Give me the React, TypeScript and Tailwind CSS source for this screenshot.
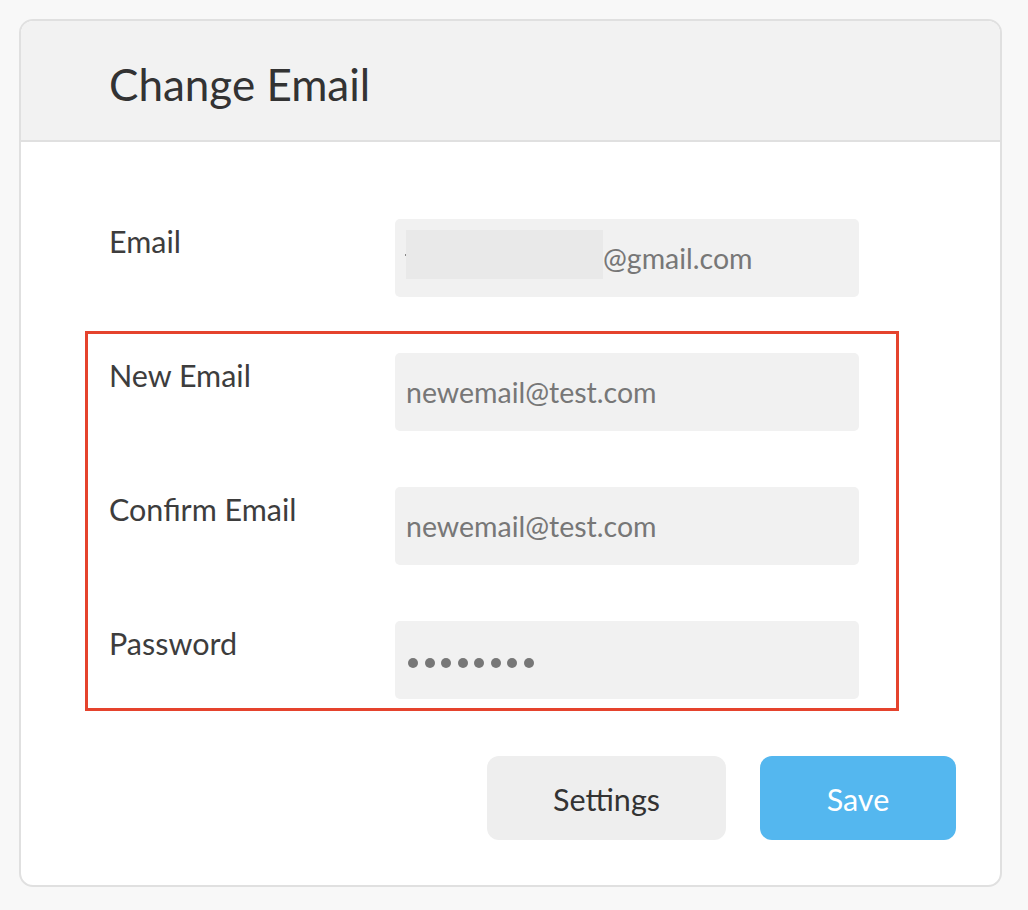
const font = { fontFamily: "Lato, 'Noto Sans', sans-serif" };

function Row({ label, children }: { label: string; children: React.ReactNode }) {
  return (
    <div className="flex">
      <span className="w-[286px] shrink-0 pt-[7px] text-[30.5px] leading-none text-[#3d3d3d]">{label}</span>
      <div className="flex h-[78px] w-[464px] items-center rounded-[5px] bg-[#f1f1f1] px-[11px] text-[28.5px] text-[#777]">
        {children}
      </div>
    </div>
  );
}

export default function App() {
  return (
    <div className="min-h-screen bg-[#f8f8f8] pt-[19px] pl-[19px]" style={font}>
      <div className="h-[868px] w-[983px] overflow-hidden rounded-[14px] border-2 border-[#e0e0e0] bg-white">
        <div className="h-[121px] border-b-2 border-[#e0e0e0] bg-[#f2f2f2] pt-[41px] pl-[88px]">
          <h1 className="text-[44px] leading-none font-normal text-[#333]">Change Email</h1>
        </div>

        <div className="pt-[77px] pl-[64px]">
          <div className="pl-[24px]">
            <Row label="Email">
              <div className="relative flex items-center">
                <span className="absolute -left-[1px] top-[20px] h-[2px] w-[2px] bg-[#888]" />
                <span className="relative -top-[4px] h-[49px] w-[197px] bg-[#e9e9e9]" />
                <span>@gmail.com</span>
              </div>
            </Row>
          </div>

          <div className="mt-[34px] flex w-[814px] flex-col gap-[56px] border-[3px] border-[#e5432d] pt-[19px] pb-[9px] pl-[21px]">
            <Row label="New Email">newemail@test.com</Row>
            <Row label="Confirm Email">newemail@test.com</Row>
            <Row label="Password">
              <div className="flex gap-[6.5px] pl-[2px] pt-[5px]">
                {Array.from({ length: 8 }).map((_, i) => (
                  <span key={i} className="h-[10px] w-[10px] rounded-full bg-[#777]" />
                ))}
              </div>
            </Row>
          </div>

          <div className="mt-[45px] flex w-[871px] justify-end gap-[34px]">
            <button className="h-[84px] w-[239px] rounded-[12px] bg-[#eeeeee] pt-[4px] text-[30.5px] text-[#333]">
              Settings
            </button>
            <button className="h-[84px] w-[196px] rounded-[12px] bg-[#54b7ef] pt-[3px] text-[30.5px] text-white">
              Save
            </button>
          </div>
        </div>
      </div>
    </div>
  );
}
